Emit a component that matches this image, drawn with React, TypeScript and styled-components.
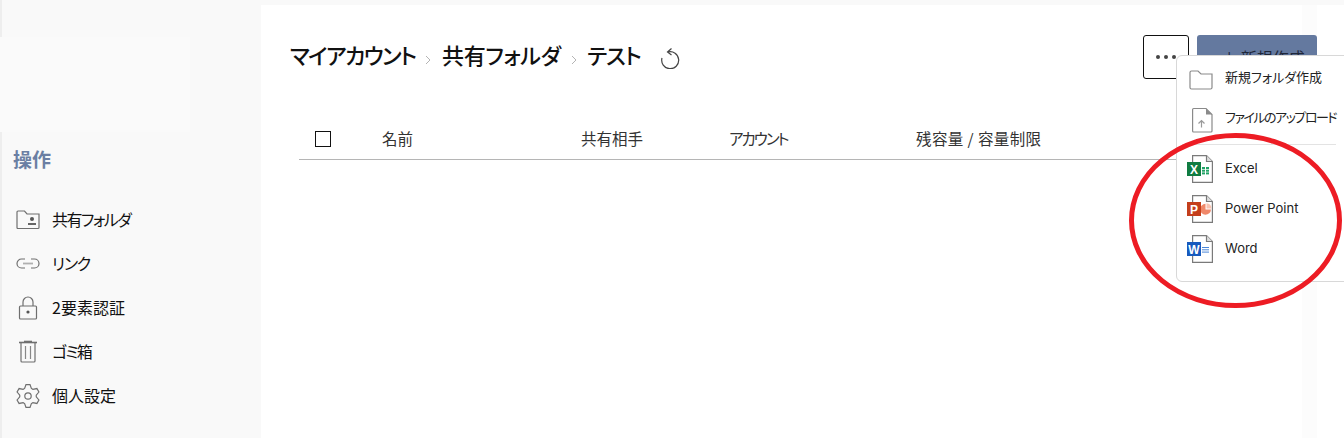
import React from "react";
import styled, { createGlobalStyle } from "styled-components";

const Global = createGlobalStyle`
  html, body { margin: 0; padding: 0; background: #fff; }
  * { box-sizing: border-box; }
`;

const Page = styled.div`
  position: relative;
  display: flex;
  width: 1344px;
  height: 438px;
  overflow: hidden;
  background: #f9f9f9;
  font-family: "Noto Sans CJK JP", "Noto Sans", sans-serif;
  font-feature-settings: "palt";
  color: #111;
`;

const Sidebar = styled.aside`
  flex: 0 0 261px;
  display: flex;
  flex-direction: column;
  padding-top: 37px;
  border-left: 2px solid #eeeeee;
`;

const LogoSlot = styled.div`
  width: 190px;
  height: 95px;
  margin-left: -2px;
  background: #fafafa;
`;

const SectionTitle = styled.h2`
  margin: 13px 0 0 11px;
  font-size: 19px;
  line-height: 28px;
  font-weight: 700;
  color: #6b7fa3;
`;

const NavList = styled.nav`
  display: flex;
  flex-direction: column;
  margin-top: 24px;
`;

const NavItem = styled.div<{ $tracking: number }>`
  display: flex;
  align-items: center;
  height: 44px;
  padding-left: 14px;
  gap: 12px;
  font-size: 16px;
  letter-spacing: ${(p) => p.$tracking}px;
`;

const NavIcon = styled.svg`
  flex: 0 0 24px;
  width: 24px;
  height: 26px;
  fill: none;
  stroke: #6f6f6f;
  stroke-width: 1.2;
`;

const Main = styled.main`
  flex: 1;
  margin-top: 5px;
  background: #fff;
  display: flex;
  padding-right: 27px;
`;

const Content = styled.div`
  flex: 1;
  display: flex;
  flex-direction: column;
  background: linear-gradient(to right, #fff calc(100% - 15px), #fcfcfc calc(100% - 15px));
  padding-left: 29px;
`;

const Header = styled.header`
  display: flex;
  align-items: flex-start;
  justify-content: space-between;
  padding-top: 30px;
  height: 104px;
`;

const Crumbs = styled.div`
  display: flex;
  align-items: center;
  height: 38px;
  font-size: 22px;
  font-weight: 500;
  color: #111;
`;

const Crumb = styled.span<{ $tracking?: number }>`
  white-space: nowrap;
  letter-spacing: ${(p) => p.$tracking ?? 0}px;
`;

const Chevron = styled.svg`
  width: 6px;
  height: 10px;
  margin: 12px 10.5px 0 10px;
  fill: none;
  stroke: #b4b4b4;
  stroke-width: 1;
`;

const Refresh = styled.svg`
  width: 20px;
  height: 22px;
  margin: 8px 0 0 19px;
  fill: none;
  stroke: #444;
  stroke-width: 1.2;
`;

const Actions = styled.div`
  display: flex;
  gap: 8px;
`;

const MoreButton = styled.button`
  width: 46px;
  height: 44px;
  border: 1px solid #111;
  border-radius: 3px;
  background: #fff;
  display: flex;
  align-items: center;
  justify-content: center;
  gap: 4px;
  padding: 0;
`;

const Dot = styled.i`
  width: 4px;
  height: 4px;
  border-radius: 50%;
  background: #444;
`;

const PrimaryButton = styled.button`
  width: 120px;
  height: 44px;
  border: 0;
  border-radius: 3px;
  background: #64799f;
  color: #1f2739;
  font: inherit;
  font-size: 16px;
  padding: 0 0 0 12px;
  white-space: nowrap;
`;

const TableHead = styled.div`
  display: grid;
  grid-template-columns: 67px 199px 148px 187px 1fr;
  align-items: center;
  height: 51px;
  margin: 0 0 0 9px;
  padding: 10px 0 0 16px;
  border-bottom: 1px solid #b5b5b5;
  font-size: 15.5px;
  color: #333;
`;

const HeadCell = styled.span<{ $tracking?: number }>`
  padding-bottom: 3px;
  letter-spacing: ${(p) => p.$tracking ?? 0}px;
  white-space: nowrap;
`;

const Check = styled.span`
  display: block;
  width: 16px;
  height: 16px;
  border: 1px solid #111;
`;

const Menu = styled.div`
  position: absolute;
  left: 1176px;
  top: 55px;
  width: 190px;
  height: 227px;
  background: #fff;
  border: 1px solid #d8d8d8;
  border-radius: 6px;
  padding-top: 2px;
`;

const MenuItem = styled.div`
  display: flex;
  align-items: center;
  height: 40px;
  padding-left: 10px;
  gap: 12px;
  font-size: 13px;
  color: #222;
  white-space: nowrap;
`;

const MenuLabel = styled.span<{ $tracking?: number; $latin?: boolean }>`
  padding-bottom: ${(p) => (p.$latin ? 2 : 4)}px;
  letter-spacing: ${(p) => p.$tracking ?? 0}px;
  font-family: ${(p) => (p.$latin ? 'Inter, "Noto Sans", sans-serif' : "inherit")};
`;

const MenuIcon = styled.svg`
  flex: 0 0 26px;
  width: 26px;
  height: 30px;
`;

const Divider = styled.hr`
  width: 154px;
  margin: 6px 0 4px 5px;
  border: 0;
  border-top: 1px solid #e3e3e3;
`;

const Annotation = styled.svg`
  position: absolute;
  left: 1125px;
  top: 128px;
  width: 219px;
  height: 184px;
  overflow: visible;
  fill: none;
  stroke: #ed1c24;
  stroke-width: 5;
  pointer-events: none;
`;

const BadgeLetter = styled.text`
  font-family: "Liberation Sans", sans-serif;
  font-weight: 700;
  font-size: 12px;
  fill: #fff;
  text-anchor: middle;
`;

const Doc = () => (
  <g fill="#fff" stroke="#7a7a7a" strokeWidth="1.2">
    <path d="M5.6 1.6H19.5L25.4 7.5V28.4H5.6Z" />
    <path d="M19.5 1.6V7.5H25.4" fill="#ddd" />
  </g>
);

const polar = (r: number, deg: number) => {
  const a = (deg * Math.PI) / 180;
  return `${(12 + r * Math.cos(a)).toFixed(2)} ${(14 + r * Math.sin(a)).toFixed(2)}`;
};

const gearPath = () => {
  const parts: string[] = [];
  for (let k = 0; k < 6; k++) {
    const a = -90 + 60 * k;
    parts.push(polar(8.3, a - 24), polar(11.6, a - 10), polar(11.6, a + 10), polar(8.3, a + 24));
  }
  return `M${parts.join("L")}Z`;
};

const nav = [
  {
    label: "共有フォルダ",
    tracking: -1.5,
    icon: (
      <>
        <path d="M1 6Q1 5 2 5H8.500L11 8H23V21.500Q23 22.500 22 22.500H2Q1 22.500 1 21.500Z" />
        <circle cx="16" cy="13" r="2" fill="#555" stroke="none" />
        <path d="M12 18H20" stroke="#555" strokeWidth="1.8" />
      </>
    ),
  },
  {
    label: "リンク",
    tracking: -1.3,
    icon: (
      <>
        <path d="M9 9H5.500a4.500 4.500 0 0 0 0 9H9M15 9h3.500a4.500 4.500 0 0 1 0 9H15" />
        <path d="M7 13.500H17" stroke="#b0b0b0" strokeWidth="1.8" />
      </>
    ),
  },
  {
    label: "2要素認証",
    tracking: 0,
    icon: (
      <>
        <rect x="3.500" y="12" width="17" height="13" rx="1" />
        <path d="M7 12V8a5 5 0 0 1 10 0v4" />
        <circle cx="12" cy="18" r="1.600" fill="#555" stroke="none" />
      </>
    ),
  },
  {
    label: "ゴミ箱",
    tracking: -1.7,
    icon: (
      <>
        <path d="M3 4.500H21" strokeWidth="1.600" />
        <path d="M8 3.500H16" strokeWidth="1.600" />
        <path d="M5 5V23Q5 24 6 24H18Q19 24 19 23V5" />
        <path d="M9.500 8V21M14.500 8V21" stroke="#888" />
      </>
    ),
  },
  {
    label: "個人設定",
    tracking: 0,
    icon: (
      <>
        <path d={gearPath()} />
        <circle cx="12" cy="14" r="3.200" />
      </>
    ),
  },
];

export default function App() {
  return (
    <Page>
      <Global />
      <Sidebar>
        <LogoSlot />
        <SectionTitle>操作</SectionTitle>
        <NavList>
          {nav.map((n) => (
            <NavItem key={n.label} $tracking={n.tracking}>
              <NavIcon viewBox="0 0 24 26">{n.icon}</NavIcon>
              {n.label}
            </NavItem>
          ))}
        </NavList>
      </Sidebar>
      <Main>
        <Content>
          <Header>
            <Crumbs>
              <Crumb $tracking={-1.55}>マイアカウント</Crumb>
              <Chevron viewBox="0 0 6 10"><path d="M1 1L5 5L1 9" /></Chevron>
              <Crumb $tracking={-0.25}>共有フォルダ</Crumb>
              <Chevron viewBox="0 0 6 10"><path d="M1 1L5 5L1 9" /></Chevron>
              <Crumb $tracking={-1}>テスト</Crumb>
              <Refresh viewBox="0 0 20 22">
                <path d="M2 11A8.500 8.500 0 1 0 8 5M11.500 1.500L7.500 5L11.500 8" />
              </Refresh>
            </Crumbs>
            <Actions>
              <MoreButton aria-label="more"><Dot /><Dot /><Dot /></MoreButton>
              <PrimaryButton>＋ 新規作成</PrimaryButton>
            </Actions>
          </Header>
          <TableHead>
            <Check />
            <HeadCell>名前</HeadCell>
            <HeadCell>共有相手</HeadCell>
            <HeadCell $tracking={-2}>アカウント</HeadCell>
            <HeadCell $tracking={0.4}>残容量 / 容量制限</HeadCell>
          </TableHead>
        </Content>
      </Main>
      <Menu>
        <MenuItem>
          <MenuIcon viewBox="0 0 26 30">
            <path d="M3 9.500Q3 8 4.500 8H11L14 11H25V24.500Q25 26 23.500 26H4.500Q3 26 3 24.500Z" fill="#fff" stroke="#8a8a8a" strokeWidth="1.2" />
          </MenuIcon>
          <MenuLabel>新規フォルダ作成</MenuLabel>
        </MenuItem>
        <MenuItem>
          <MenuIcon viewBox="0 0 26 30">
            <path d="M5.600 6.500Q5.600 5.500 6.600 5.500H19L25 11.500V28Q25 29 24 29H6.600Q5.600 29 5.600 28Z" fill="#fff" stroke="#8a8a8a" strokeWidth="1.2" />
            <path d="M19 5.500L25 11.500H19Z" fill="#8a8a8a" />
            <path d="M14.500 24.500V17.500M11.500 20.500L14.500 17.500L17.500 20.500" fill="none" stroke="#9a9a9a" strokeWidth="1.2" />
          </MenuIcon>
          <MenuLabel $tracking={-1.5}>ファイルのアップロード</MenuLabel>
        </MenuItem>
        <Divider />
        <MenuItem>
          <MenuIcon viewBox="0 0 26 30">
            <Doc />
            <g fill="#21a366">
              <rect x="15" y="13" width="3" height="2" /><rect x="19" y="13" width="3" height="2" />
              <rect x="15" y="15.700" width="3" height="2" /><rect x="19" y="15.700" width="3" height="2" />
              <rect x="15" y="18.400" width="3" height="2" /><rect x="19" y="18.400" width="3" height="2" />
            </g>
            <rect x="0" y="8" width="14" height="14" fill="#107c41" />
            <BadgeLetter x="7" y="19.500">X</BadgeLetter>
          </MenuIcon>
          <MenuLabel $latin>Excel</MenuLabel>
        </MenuItem>
        <MenuItem>
          <MenuIcon viewBox="0 0 26 30">
            <Doc />
            <path d="M18.500 9.800V15.500H24a5.500 5.500 0 1 1 -5.500 -5.700Z" fill="#f0886a" />
            <path d="M19.500 9.200a5.500 5.500 0 0 1 5 5.300h-5Z" fill="#f9c4b2" />
            <rect x="0" y="8" width="14" height="14" fill="#c43e1c" />
            <BadgeLetter x="7" y="19.500">P</BadgeLetter>
          </MenuIcon>
          <MenuLabel $latin>Power Point</MenuLabel>
        </MenuItem>
        <MenuItem>
          <MenuIcon viewBox="0 0 26 30">
            <Doc />
            <path d="M15 13.500H22M15 15.800H22M15 18.100H22" stroke="#4a86d8" strokeWidth="1" />
            <rect x="0" y="8" width="14" height="14" fill="#185abd" />
            <BadgeLetter x="7" y="19.500">W</BadgeLetter>
          </MenuIcon>
          <MenuLabel $latin>Word</MenuLabel>
        </MenuItem>
      </Menu>
      <Annotation viewBox="0 0 219 184">
        <ellipse cx="110.500" cy="92.500" rx="104" ry="85" />
      </Annotation>
    </Page>
  );
}
